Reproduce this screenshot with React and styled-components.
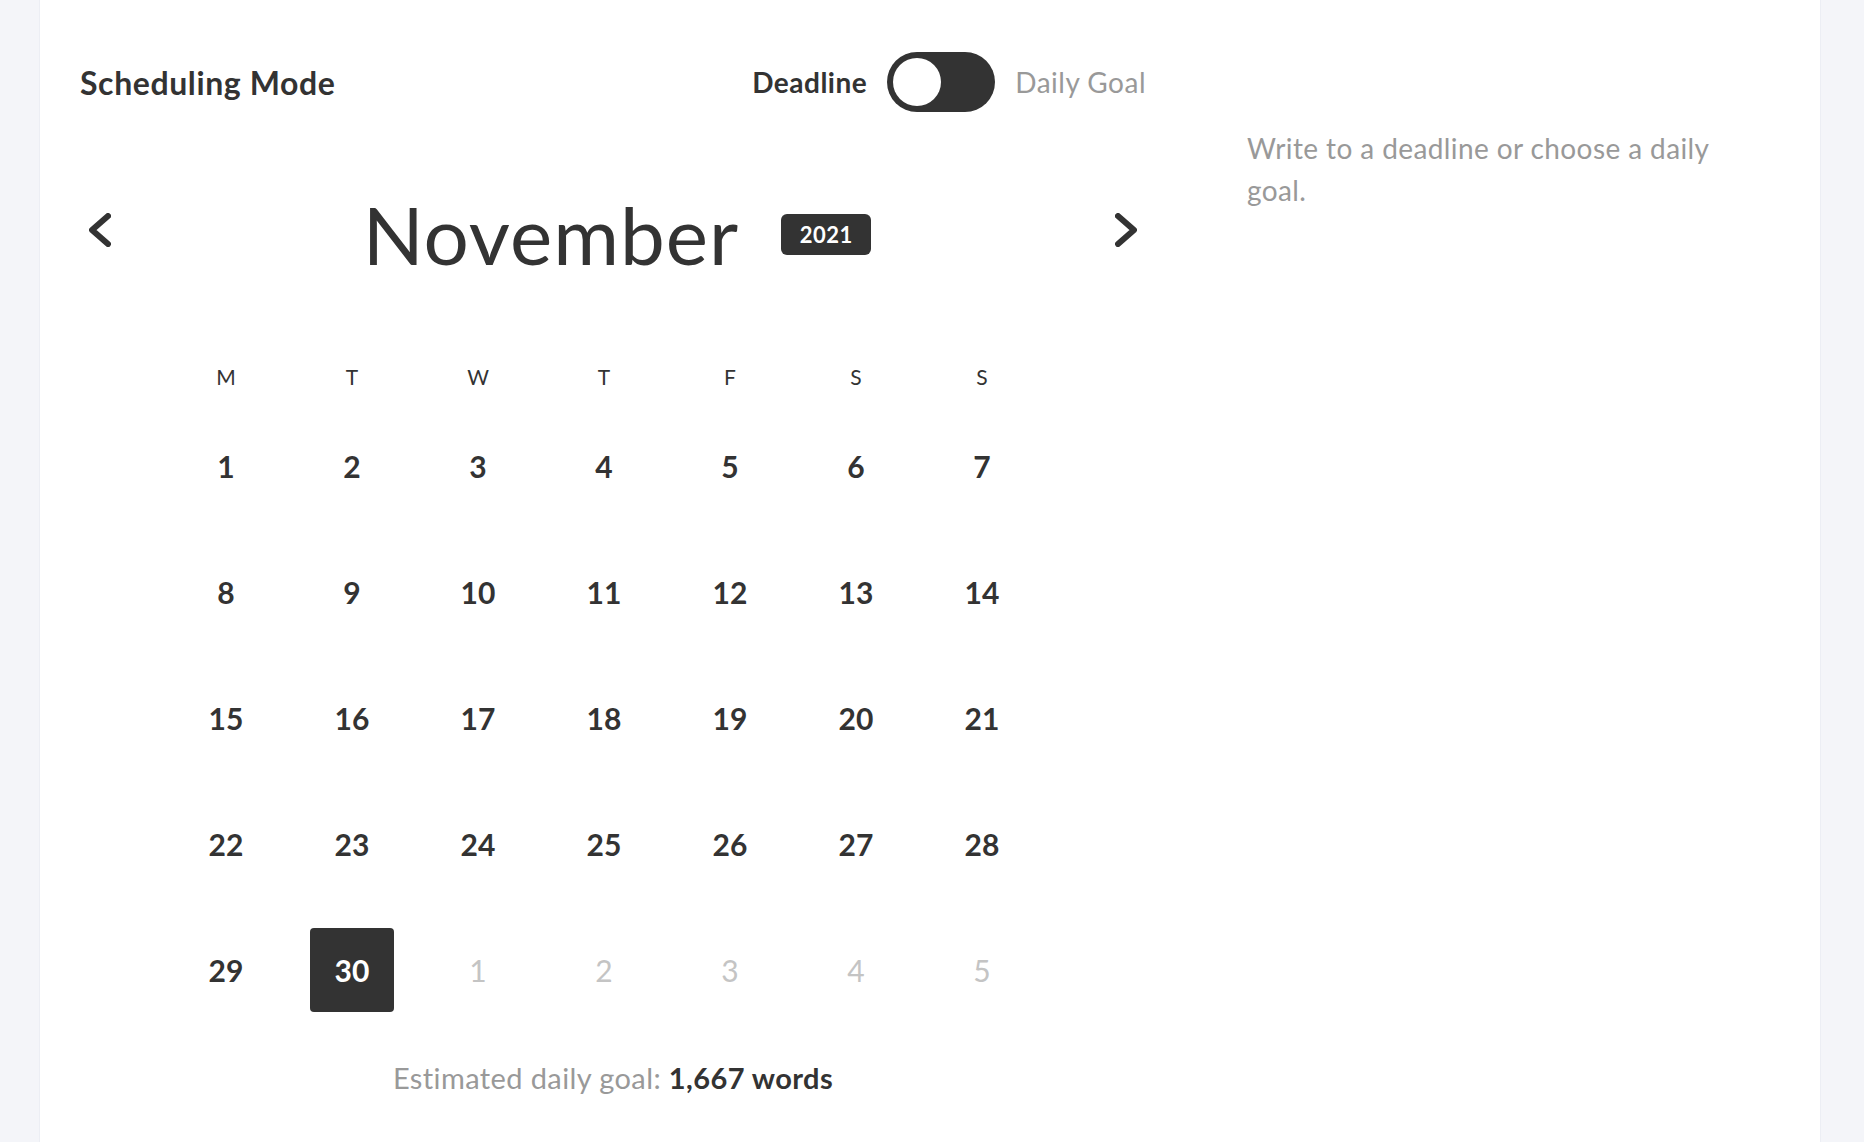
import React from 'react'
import styled, { createGlobalStyle } from 'styled-components'

const GlobalStyle = createGlobalStyle`
  html, body {
    margin: 0;
    padding: 0;
    background: #f4f5f9;
    font-family: Lato, "Noto Sans", sans-serif;
    color: #333;
  }
  * { box-sizing: border-box; }
`

const weekdays = ['M', 'T', 'W', 'T', 'F', 'S', 'S']

const days = [
  ...Array.from({ length: 30 }, (_, i) => ({ n: i + 1, current: true })),
  ...Array.from({ length: 5 }, (_, i) => ({ n: i + 1, current: false })),
]

const Chevron = ({ dir }) => (
  <svg width="22" height="34" viewBox="0 0 22 34" fill="none">
    <path
      d={dir === 'left' ? 'M19 3 L3 17 L19 31' : 'M3 3 L19 17 L3 31'}
      stroke="#333"
      strokeWidth="6"
      strokeLinecap="round"
      strokeLinejoin="round"
    />
  </svg>
)

const App = () => {
  return (
    <Page>
      <GlobalStyle />
      <Card>
        <LeftCol>
          <Header>
            <Title>Scheduling Mode</Title>
            <ModeSwitch>
              <ModeLabel active>Deadline</ModeLabel>
              <Toggle>
                <Knob />
              </Toggle>
              <ModeLabel>Daily Goal</ModeLabel>
            </ModeSwitch>
          </Header>

          <MonthRow>
            <NavButton aria-label="Previous month">
              <Chevron dir="left" />
            </NavButton>
            <MonthTitle>
              <MonthName>November</MonthName>
              <YearBadge>2021</YearBadge>
            </MonthTitle>
            <NavButton aria-label="Next month">
              <Chevron dir="right" />
            </NavButton>
          </MonthRow>

          <WeekRow>
            {weekdays.map((d, i) => (
              <WeekDay key={i}>{d}</WeekDay>
            ))}
          </WeekRow>

          <DayGrid>
            {days.map((d, i) => (
              <Day key={i} muted={!d.current} selected={d.current && d.n === 30}>
                {d.n}
              </Day>
            ))}
          </DayGrid>

          <Estimate>
            Estimated daily goal: <strong>1,667 words</strong>
          </Estimate>
        </LeftCol>

        <RightCol>
          <Description>Write to a deadline or choose a daily goal.</Description>
        </RightCol>
      </Card>
    </Page>
  )
}

const Page = styled.div`
  min-height: 100vh;
  padding: 0 44px 0 40px;
  background: #f4f5f9;
`
const Card = styled.section`
  min-height: 100vh;
  background: #fff;
  box-shadow: 0 0 0 1px #eceef4;
  padding: 52px 40px 40px 40px;
  display: grid;
  grid-template-columns: 1066px 1fr;
  column-gap: 101px;
  align-items: start;
`
const LeftCol = styled.div`
  display: flex;
  flex-direction: column;
`
const Header = styled.div`
  height: 60px;
  display: flex;
  align-items: center;
  justify-content: space-between;
`
const Title = styled.h2`
  margin: 0;
  font-size: 32px;
  letter-spacing: 0.6px;
  font-weight: 700;
  color: #333;
`
const ModeSwitch = styled.div`
  display: flex;
  align-items: center;
  gap: 20px;
`
const ModeLabel = styled.span`
  font-size: 28px;
  letter-spacing: 0.5px;
  font-weight: ${(p) => (p.active ? 700 : 400)};
  color: ${(p) => (p.active ? '#333' : '#999')};
`
const Toggle = styled.div`
  width: 108px;
  height: 60px;
  border-radius: 30px;
  background: #333;
  padding: 6px;
  display: flex;
  align-items: center;
`
const Knob = styled.div`
  width: 48px;
  height: 48px;
  border-radius: 50%;
  background: #fff;
`
const MonthRow = styled.div`
  margin-top: 82px;
  height: 80px;
  display: flex;
  align-items: center;
  justify-content: space-between;
`
const NavButton = styled.button`
  width: 40px;
  height: 50px;
  padding: 0;
  margin-bottom: 8px;
  border: none;
  background: none;
  display: flex;
  align-items: center;
  justify-content: center;
  cursor: pointer;
`
const MonthTitle = styled.div`
  display: flex;
  align-items: center;
  gap: 42px;
  padding-left: 8px;
`
const MonthName = styled.h1`
  margin: 0;
  font-size: 80px;
  letter-spacing: 1px;
  line-height: 1;
  font-weight: 400;
  color: #333;
`
const YearBadge = styled.span`
  width: 90px;
  height: 41px;
  border-radius: 6px;
  background: #333;
  color: #fff;
  font-size: 22px;
  letter-spacing: 0.5px;
  font-weight: 700;
  display: flex;
  align-items: center;
  justify-content: center;
`
const WeekRow = styled.div`
  margin: 87px 0 0 104px;
  height: 30px;
  display: grid;
  grid-template-columns: repeat(7, 84px);
  column-gap: 42px;
`
const WeekDay = styled.span`
  display: flex;
  align-items: center;
  justify-content: center;
  font-size: 21px;
  font-weight: 400;
  color: #333;
`
const DayGrid = styled.div`
  margin: 33px 0 0 104px;
  display: grid;
  grid-template-columns: repeat(7, 84px);
  grid-auto-rows: 84px;
  gap: 42px;
`
const Day = styled.div`
  display: flex;
  align-items: center;
  justify-content: center;
  border-radius: 4px;
  font-size: 30px;
  font-weight: ${(p) => (p.muted ? 400 : 700)};
  color: ${(p) => (p.selected ? '#fff' : p.muted ? '#c4c4c4' : '#333')};
  background: ${(p) => (p.selected ? '#333' : 'transparent')};
`
const Estimate = styled.p`
  margin: 49px 0 0;
  line-height: 34px;
  text-align: center;
  font-size: 29px;
  letter-spacing: 0.4px;
  color: #999;

  strong {
    font-weight: 700;
    color: #333;
  }
`
const RightCol = styled.aside`
  padding-top: 75px;
`
const Description = styled.p`
  margin: 0;
  max-width: 490px;
  font-size: 28px;
  letter-spacing: 0.4px;
  line-height: 42px;
  color: #999;
`

export default App
